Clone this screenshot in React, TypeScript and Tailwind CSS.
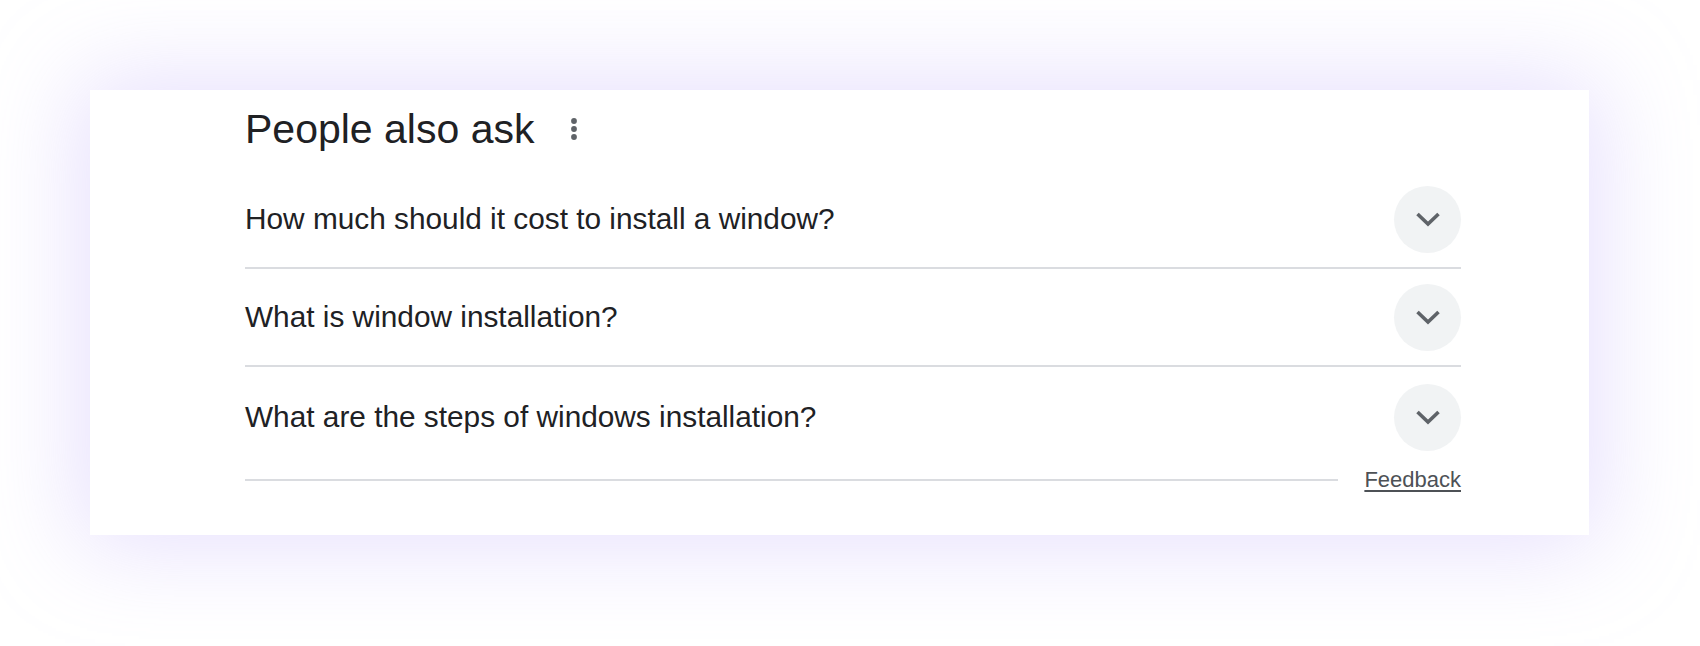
import React from "react";

const questions = [
  "How much should it cost to install a window?",
  "What is window installation?",
  "What are the steps of windows installation?",
];

function Chevron() {
  return (
    <svg width="26" height="16" viewBox="0 0 26 16" fill="none">
      <polyline
        points="2.5,3 13,13 23.5,3"
        stroke="#5f6368"
        strokeWidth="3.6"
        strokeLinecap="butt"
        strokeLinejoin="miter"
      />
    </svg>
  );
}

function Kebab() {
  return (
    <svg width="24" height="28" viewBox="0 0 24 28" fill="#5f6368">
      <circle cx="12" cy="6" r="2.9" />
      <circle cx="12" cy="14" r="2.9" />
      <circle cx="12" cy="22" r="2.9" />
    </svg>
  );
}

export default function App() {
  return (
    <div
      className="w-[1700px] h-[646px] bg-white overflow-hidden pt-[90px] pl-[90px]"
      style={{ fontFamily: '"Liberation Sans", Arial, sans-serif' }}
    >
      <div className="w-[1499px] h-[445px] bg-white shadow-[0_0_90px_10px_rgba(222,212,252,0.75)] pt-[19px] pl-[155px] pr-[128px]">
        <div className="flex items-center h-[40px]">
          <h2 className="text-[41px] leading-[40px] text-[#202124] font-normal">People also ask</h2>
          <div className="ml-[28px] flex items-center">
            <Kebab />
          </div>
        </div>
        <div className="mt-[22px]">
          {questions.map((q, i) => (
            <div
              key={q}
              className={
                i < 2
                  ? "flex items-center justify-between h-[98px] border-b-[2px] border-[#dadce0]"
                  : "flex items-center justify-between h-[100px]"
              }
            >
              <span className="text-[29.8px] leading-[36px] text-[#202124]">{q}</span>
              <div className="w-[67px] h-[67px] rounded-full bg-[#f1f3f4] flex items-center justify-center">
                <Chevron />
              </div>
            </div>
          ))}
          <div className="flex items-center h-[26px]">
            <div className="flex-1 h-[2px] bg-[#dadce0]" />
            <a className="ml-[26px] text-[22px] leading-[26px] text-[#4d5156] underline underline-offset-[3px]">
              Feedback
            </a>
          </div>
        </div>
      </div>
    </div>
  );
}
